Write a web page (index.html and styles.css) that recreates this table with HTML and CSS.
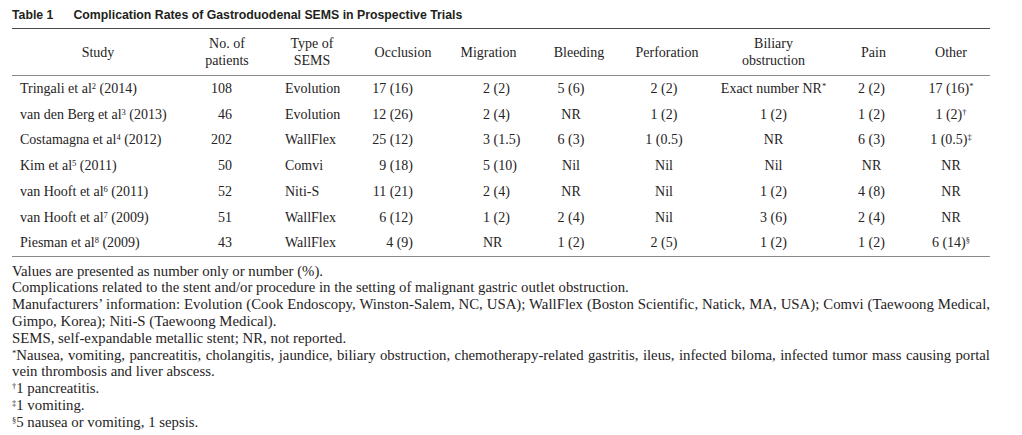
FILE: index.html
```html
<!DOCTYPE html>
<html lang="en">
<head>
<meta charset="utf-8">
<title>Table 1</title>
<link rel="stylesheet" href="styles.css">
</head>
<body>
<div class="page">
  <div class="caption"><span class="label">Table 1</span><span class="title">Complication Rates of Gastroduodenal SEMS in Prospective Trials</span></div>
  <table class="grid">
    <colgroup>
      <col class="c-study"><col class="c-no"><col class="c-type"><col class="c-occ"><col class="c-mig"><col class="c-bleed"><col class="c-perf"><col class="c-bil"><col class="c-pain"><col class="c-other">
    </colgroup>
    <thead>
      <tr>
        <th>Study</th>
        <th>No. of<br>patients</th>
        <th>Type of<br>SEMS</th>
        <th>Occlusion</th>
        <th>Migration</th>
        <th>Bleeding</th>
        <th>Perforation</th>
        <th>Biliary<br>obstruction</th>
        <th>Pain</th>
        <th>Other</th>
      </tr>
    </thead>
    <tbody>
      <tr><td>Tringali et al<sup>2</sup> (2014)</td><td>108</td><td>Evolution</td><td>17 (16)</td><td>2 (2)</td><td>5 (6)</td><td>2 (2)</td><td>Exact number NR<sup>*</sup></td><td>2 (2)</td><td>17 (16)<sup>*</sup></td></tr>
      <tr><td>van den Berg et al<sup>3</sup> (2013)</td><td>46</td><td>Evolution</td><td>12 (26)</td><td>2 (4)</td><td>NR</td><td>1 (2)</td><td>1 (2)</td><td>1 (2)</td><td>1 (2)<sup>†</sup></td></tr>
      <tr><td>Costamagna et al<sup>4</sup> (2012)</td><td>202</td><td>WallFlex</td><td>25 (12)</td><td>3 (1.5)</td><td>6 (3)</td><td>1 (0.5)</td><td>NR</td><td>6 (3)</td><td>1 (0.5)<sup>‡</sup></td></tr>
      <tr><td>Kim et al<sup>5</sup> (2011)</td><td>50</td><td>Comvi</td><td>9 (18)</td><td>5 (10)</td><td>Nil</td><td>Nil</td><td>Nil</td><td>NR</td><td>NR</td></tr>
      <tr><td>van Hooft et al<sup>6</sup> (2011)</td><td>52</td><td>Niti-S</td><td>11 (21)</td><td>2 (4)</td><td>NR</td><td>Nil</td><td>1 (2)</td><td>4 (8)</td><td>NR</td></tr>
      <tr><td>van Hooft et al<sup>7</sup> (2009)</td><td>51</td><td>WallFlex</td><td>6 (12)</td><td>1 (2)</td><td>2 (4)</td><td>Nil</td><td>3 (6)</td><td>2 (4)</td><td>NR</td></tr>
      <tr><td>Piesman et al<sup>8</sup> (2009)</td><td>43</td><td>WallFlex</td><td>4 (9)</td><td>NR</td><td>1 (2)</td><td>2 (5)</td><td>1 (2)</td><td>1 (2)</td><td>6 (14)<sup>§</sup></td></tr>
    </tbody>
  </table>
  <div class="notes">
    <p>Values are presented as number only or number (%).</p>
    <p>Complications related to the stent and/or procedure in the setting of malignant gastric outlet obstruction.</p>
    <p>Manufacturers’ information: Evolution (Cook Endoscopy, Winston-Salem, NC, USA); WallFlex (Boston Scientific, Natick, MA, USA); Comvi (Taewoong Medical, Gimpo, Korea); Niti-S (Taewoong Medical).</p>
    <p>SEMS, self-expandable metallic stent; NR, not reported.</p>
    <p><sup>*</sup>Nausea, vomiting, pancreatitis, cholangitis, jaundice, biliary obstruction, chemotherapy-related gastritis, ileus, infected biloma, infected tumor mass causing portal vein thrombosis and liver abscess.</p>
    <p><sup>†</sup>1 pancreatitis.</p>
    <p><sup>‡</sup>1 vomiting.</p>
    <p><sup>§</sup>5 nausea or vomiting, 1 sepsis.</p>
  </div>
</div>
</body>
</html>
```
FILE: styles.css
```css
html, body {
  margin: 0;
  padding: 0;
  background: #ffffff;
}

.page {
  width: 978px;
  padding: 7px 0 0 12px;
  color: #262324;
  font-family: "Liberation Serif", "Times New Roman", serif;
  font-size: 14px;
}

.caption {
  font-family: "Liberation Sans", Arial, sans-serif;
  font-weight: bold;
  font-size: 12.3px;
  line-height: 16px;
  color: #231f20;
  display: flex;
  gap: 20px;
  height: 21px;
}

.grid {
  width: 978px;
  border-collapse: collapse;
  table-layout: fixed;
}

.c-study { width: 172px; }
.c-no { width: 86px; }
.c-type { width: 84px; }
.c-occ { width: 91px; }
.c-mig { width: 85px; }
.c-bleed { width: 92px; }
.c-perf { width: 90px; }
.c-bil { width: 123px; }
.c-pain { width: 77px; }
.c-other { width: 78px; }

.grid thead tr {
  height: 47px;
  border-top: 1.5px solid #4a4a4a;
  border-bottom: 1px solid #8a8a8a;
}

.grid th {
  font-weight: normal;
  text-align: center;
  line-height: 17px;
  padding: 0;
  vertical-align: middle;
}

.grid tbody tr {
  height: 25.8px;
}

.grid tbody tr:last-child {
  border-bottom: 1px solid #8a8a8a;
}

.grid td {
  padding: 0;
  line-height: 17px;
  white-space: nowrap;
  vertical-align: middle;
}

.grid th:nth-child(4) { padding-left: 7px; }
.grid th:nth-child(5) { padding-left: 2px; }
.grid th:nth-child(6) { padding-left: 6px; }

.grid td:nth-child(1) { padding-left: 8px; }
.grid td:nth-child(2) { text-align: right; padding-right: 38px; }
.grid td:nth-child(3) { padding-left: 15px; }
.grid td:nth-child(4) { text-align: right; padding-right: 32px; }
.grid td:nth-child(5) { padding-left: 38px; }
.grid td:nth-child(6) { text-align: center; padding-right: 10px; }
.grid td:nth-child(7) { text-align: center; padding-right: 6px; }
.grid td:nth-child(8) { text-align: center; }
.grid td:nth-child(9) { text-align: center; padding-right: 4px; }
.grid td:nth-child(10) { text-align: center; }

sup {
  font-size: 8.5px;
  line-height: 0;
  vertical-align: 4px;
}

.notes {
  padding-top: 6px;
  font-size: 14.8px;
}

.notes p {
  margin: 0;
  line-height: 16.8px;
  text-align: justify;
}
```
